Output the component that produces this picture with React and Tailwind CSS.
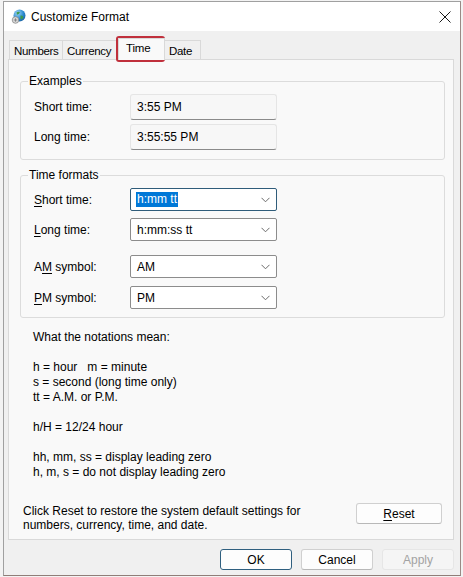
import React from "react";

const font = { fontFamily: '"Liberation Sans", Arial, sans-serif' };

const Chevron = () => (
  <svg width="9" height="6" viewBox="0 0 9 6" className="shrink-0">
    <path d="M0.5 0.8 L4.5 4.8 L8.5 0.8" fill="none" stroke="#6b6b6b" strokeWidth="1" />
  </svg>
);

const GlobeIcon = () => (
  <svg width="15" height="15" viewBox="0 0 15 15">
    <defs>
      <radialGradient id="g" cx="0.35" cy="0.3" r="0.8">
        <stop offset="0" stopColor="#9fd3f5" />
        <stop offset="0.6" stopColor="#2a8bd0" />
        <stop offset="1" stopColor="#1b5d9c" />
      </radialGradient>
    </defs>
    <circle cx="8.5" cy="6.5" r="6" fill="url(#g)" />
    <path d="M5.5 3.5 Q7.5 2 9 3.5 Q8 5.5 6 5.8 Z M9.5 6.5 Q12 6 12.5 8.5 Q11 11 9.5 10 Z" fill="#3f9b4b" />
    <circle cx="4.5" cy="11" r="3.3" fill="#d8d8d8" stroke="#8c8c8c" strokeWidth="0.8" />
    <path d="M4.5 9.3 V12.7 M2.8 11 H6.2" stroke="#7a7a7a" strokeWidth="0.8" />
  </svg>
);

const Tab = ({ label, selected, w }) =>
  selected ? (
    <div
      className="relative z-10 -mb-px h-[22px] border border-b-0 border-[#d9d9d9] bg-[#f9f9f9] pl-[7px] pt-[1px] text-[11.5px] leading-[16px] tracking-[-0.2px]"
      style={{ width: w }}
    >
      {label}
    </div>
  ) : (
    <div
      className="h-[19px] border border-b-0 border-[#d9d9d9] bg-[#f0f0f0] pl-[4px] pt-[3px] text-[11.5px] leading-[15px] tracking-[-0.3px] -ml-px first:ml-0"
      style={{ width: w }}
    >
      {label}
    </div>
  );

const GroupBox = ({ title, className, children }) => (
  <div className={"relative rounded-[3px] border border-[#dcdcdc] " + className}>
    <span className="absolute -top-[9px] left-[7px] bg-[#f9f9f9] px-[1px] text-[12px] leading-[16px]">
      {title}
    </span>
    {children}
  </div>
);

const Mn = ({ children }) => <span className="underline underline-offset-2">{children}</span>;

const ReadBox = ({ value, h }) => (
  <div
    className="flex w-[147px] items-center rounded-[3px] border border-[#e5e5e5] border-b-[#8a8a8a] bg-[#f7f7f7] pl-[6px] text-[12px]"
    style={{ height: h }}
  >
    {value}
  </div>
);

const Dropdown = ({ value, focused }) => (
  <div
    className={
      "flex h-[23px] w-[147px] items-center justify-between rounded-[2px] border bg-white pl-[5px] pr-[6px] text-[12px] " +
      (focused ? "border-[#2f5c7a]" : "border-[#8c8c8c]")
    }
  >
    {focused ? (
      <span className="bg-[#0078d7] px-[1px] leading-[15px] text-white">{value}</span>
    ) : (
      <span className="pl-[1px]">{value}</span>
    )}
    <Chevron />
  </div>
);

const Row = ({ label, children, className = "" }) => (
  <div className={"flex items-center " + className}>
    <div className="w-[109px] pl-[13px] text-[12px]">{label}</div>
    {children}
  </div>
);

const Button = ({ children, variant }) => {
  const cls =
    variant === "default"
      ? "border-[#2f5f7f] bg-[#fdfdfd] text-black"
      : variant === "disabled"
      ? "border-[#e6e6e6] bg-[#f5f5f5] text-[#a3a3a3]"
      : "border-[#d0d0d0] border-b-[#b8b8b8] bg-[#fdfdfd] text-black";
  return (
    <div className={"flex h-[21px] w-[72px] items-center justify-center rounded-[3px] border text-[12px] " + cls}>
      {children}
    </div>
  );
};

export default function App() {
  return (
    <div className="h-[577px] w-[463px] overflow-hidden bg-[#f3f3f3] pl-[3px] pt-[1px] text-black" style={font}>
      <div className="flex h-[575px] w-[458px] flex-col border border-[#a0a0a0] border-r-[#9a8a86] border-b-[#8f7d78] bg-[#f0f0f0]">
        {/* title bar */}
        <div className="flex h-[29px] shrink-0 items-center bg-white pl-[7px] pr-[7px]">
          <GlobeIcon />
          <span className="ml-[5px] text-[12px]">Customize Format</span>
          <div className="ml-auto mr-[1px] flex h-[14px] w-[14px] items-center justify-center">
            <svg width="12" height="12" viewBox="0 0 12 12">
              <path d="M0.5 0.5 L11.5 11.5 M11.5 0.5 L0.5 11.5" stroke="#1a1a1a" strokeWidth="1" />
            </svg>
          </div>
        </div>

        {/* body */}
        <div className="flex flex-1 flex-col pl-[4px] pr-[6px] pt-[7px]">
          <div className="relative flex items-end pl-[1px]">
            <Tab label="Numbers" w={54} />
            <Tab label="Currency" w={56} />
            <Tab label="Time" selected w={47} />
            <Tab label="Date" w={37} />
            <div className="pointer-events-none absolute left-[108px] top-[-2px] h-[26px] w-[49px] rounded-[3px] border-[3px] border-[#c0303c]" />
          </div>

          <div className="flex h-[481px] flex-col border border-[#d9d9d9] bg-[#f9f9f9] pl-[11px] pr-[8px] pt-[21px] pb-[7px]">
            <GroupBox title="Examples" className="pt-[12px] pb-[9px]">
              <Row label="Short time:">
                <ReadBox value="3:55 PM" h={26} />
              </Row>
              <Row label="Long time:" className="mt-[4px]">
                <ReadBox value="3:55:55 PM" h={26} />
              </Row>
            </GroupBox>

            <GroupBox title="Time formats" className="mt-[15px] pt-[12px] pb-[8px]">
              <Row label={<><Mn>S</Mn>hort time:</>}>
                <Dropdown value="h:mm tt" focused />
              </Row>
              <Row label={<><Mn>L</Mn>ong time:</>} className="mt-[7px]">
                <Dropdown value="h:mm:ss tt" />
              </Row>
              <Row label={<>A<Mn>M</Mn> symbol:</>} className="mt-[14px]">
                <Dropdown value="AM" />
              </Row>
              <Row label={<><Mn>P</Mn>M symbol:</>} className="mt-[8px]">
                <Dropdown value="PM" />
              </Row>
            </GroupBox>

            <div className="ml-[13px] mt-[12px] text-[12px] leading-[15px]">
              <p>What the notations mean:</p>
              <p className="mt-[15px]">h = hour&nbsp;&nbsp;&nbsp;m = minute</p>
              <p>s = second (long time only)</p>
              <p>tt = A.M. or P.M.</p>
              <p className="mt-[15px]">h/H = 12/24 hour</p>
              <p className="mt-[15px]">hh, mm, ss = display leading zero</p>
              <p>h, m, s = do not display leading zero</p>
            </div>

            <div className="mt-auto flex items-start justify-between">
              <p className="ml-[3px] mt-[1px] text-[12px] leading-[14px]">
                Click Reset to restore the system default settings for
                <br />
                numbers, currency, time, and date.
              </p>
              <div className="mb-[2px] mr-[3px] flex h-[21px] w-[86px] items-center justify-center rounded-[3px] border border-[#d0d0d0] border-b-[#b8b8b8] bg-[#fdfdfd] text-[12px]">
                <span>
                  <Mn>R</Mn>eset
                </span>
              </div>
            </div>
          </div>

          <div className="mt-[9px] flex justify-end gap-[9px]">
            <Button variant="default">OK</Button>
            <Button>Cancel</Button>
            <Button variant="disabled">Apply</Button>
          </div>
        </div>
      </div>
    </div>
  );
}
